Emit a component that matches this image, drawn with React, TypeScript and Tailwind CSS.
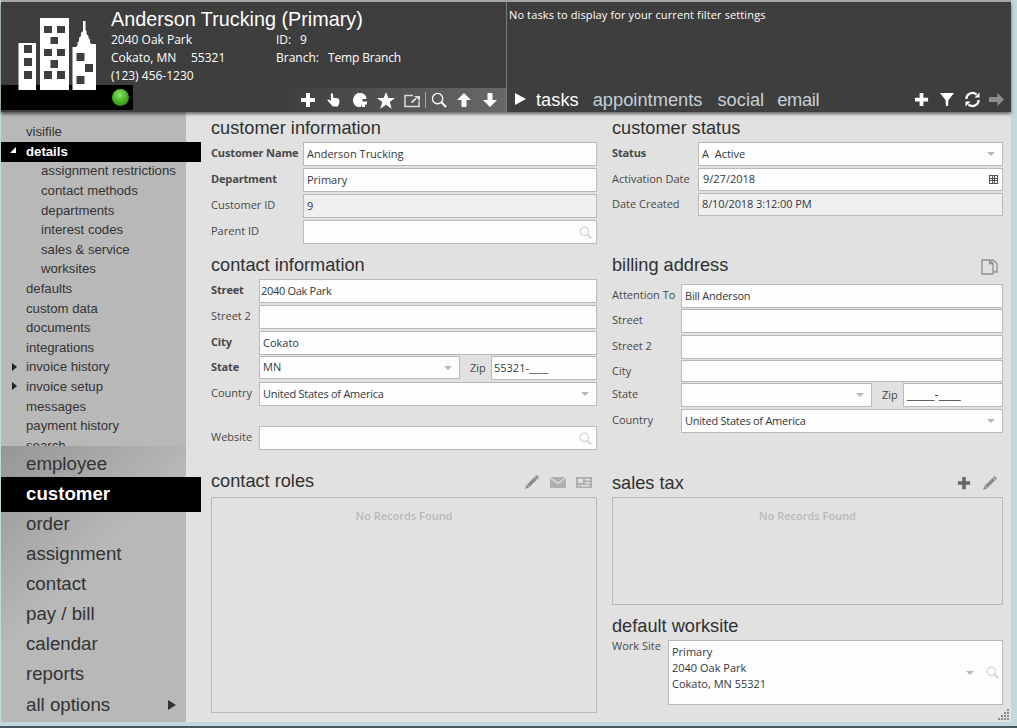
import React from "react";

const ui = "font-['Open_Sans','Noto_Sans',sans-serif]";
const ar = "font-['Liberation_Sans',Arial,sans-serif]";

function Plus({ c = "#fff", s = 16 }: { c?: string; s?: number }) {
  return (
    <svg width={s} height={s} viewBox="0 0 16 16" fill={c}>
      <path d="M6 1h4v5h5v4h-5v5H6v-5H1V6h5z" />
    </svg>
  );
}
function Hand() {
  return (
    <svg width="16" height="16" viewBox="0 0 16 16" fill="#fff">
      <path d="M5.2 1.5c.8-.6 1.7 0 1.8.8L7.3 6l1-.3 1.2.4 1.2-.1 1.2.6 1 .5.5 1.3-.2 3.4-1.5 2.7H6.6L3.8 11 1.6 8.8c-.5-.8.3-1.700 1.2-1.300L5 9 4.8 2.400c0-.4.1-.7.4-.9z" />
    </svg>
  );
}
function Puzzle() {
  return (
    <svg width="16" height="16" viewBox="0 0 16 16" fill="#fff">
      <path d="M6 1h3.500c2 .4 3.600 1.600 4.500 3.500L14.500 7H10.500v2.500H15V12.500h-2v2.500H10v-1.500H9V15H5.500C3 14 1.200 11.500 1 9 1 5.500 3 2 6 1z" />
    </svg>
  );
}
function Star() {
  return (
    <svg width="18" height="17" viewBox="0 0 18 17" fill="#fff">
      <path d="M9 0l2.400 6H18l-5.300 4 2 6.700L9 12.800l-5.700 3.900 2-6.700L0 6h6.600z" />
    </svg>
  );
}
function External() {
  return (
    <svg width="17" height="15" viewBox="0 0 17 15" fill="none" stroke="#dcdcdc">
      <path d="M9 2.500H1V13.500H15V8" strokeWidth="1.500" />
      <path d="M7.500 9.500L12 5.500" strokeWidth="1.800" />
      <path d="M10 3h6v5z" fill="#dcdcdc" stroke="none" />
    </svg>
  );
}
function Search({ c = "#fff", s = 17, w = 1.8 }: { c?: string; s?: number; w?: number }) {
  return (
    <svg width={s} height={s} viewBox="0 0 17 17" fill="none" stroke={c}>
      <circle cx="7" cy="7" r="5.500" strokeWidth={w} />
      <path d="M11 11l5 5" strokeWidth={w + 0.8} />
    </svg>
  );
}
function Up() {
  return (
    <svg width="14" height="16" viewBox="0 0 14 16" fill="#fff">
      <path d="M7 1l7 7H9.500v7h-5V8H0z" />
    </svg>
  );
}
function Down() {
  return (
    <svg width="14" height="16" viewBox="0 0 14 16" fill="#fff">
      <path d="M7 15L0 8h4.500V1h5v7H14z" />
    </svg>
  );
}
function Refresh() {
  return (
    <svg width="17" height="17" viewBox="0 0 17 17" fill="none" stroke="#fff" strokeWidth="2.300">
      <path d="M2.300 8a6.200 6.200 0 0 1 10.200-4.500" />
      <path d="M14.700 9a6.200 6.200 0 0 1-10.200 4.500" />
      <path d="M15.500 1.500v5h-5z" fill="#fff" stroke="none" />
      <path d="M1.500 15.500v-5h5z" fill="#fff" stroke="none" />
    </svg>
  );
}
function Pencil() {
  return (
    <svg width="16" height="16" viewBox="0 0 16 16" fill="#8b8b8b">
      <path d="M12.500 1L15 3.500 5 13.500 1 15l1.500-4z" />
      <path d="M3 11l2 2" stroke="#e1e1e1" strokeWidth=".8" />
      <path d="M11 3l2 2" stroke="#e1e1e1" strokeWidth=".8" />
    </svg>
  );
}
function Mail() {
  return (
    <svg width="16" height="11" viewBox="0 0 16 11">
      <path d="M0 0h16v11H0z" fill="#b0b0b0" />
      <path d="M0 .5l8 6 8-6" fill="none" stroke="#e1e1e1" strokeWidth="1.200" />
    </svg>
  );
}
function Card() {
  return (
    <svg width="16" height="11" viewBox="0 0 16 11">
      <path d="M0 0h16v11H0z" fill="#b0b0b0" />
      <path d="M2 2h5v4H2zM9 2h5v1.500H9zM9 5h5v1.500H9zM2 8h1.500v1.500H2zM5 8h9v1.500H5z" fill="#e1e1e1" />
    </svg>
  );
}
function Docs() {
  return (
    <svg width="17" height="16" viewBox="0 0 17 16" fill="none" stroke="#8d8d8d" strokeWidth="1.300">
      <path d="M1 1h7.500l3.500 3.500V15H1z" />
      <path d="M8.500 1v3.500H12" />
      <path d="M10 1h2l4 3.500V13h-3" />
    </svg>
  );
}
function Caret() {
  return <div className="w-0 h-0 border-l-[4px] border-r-[4px] border-t-[4px] border-l-transparent border-r-transparent border-t-[#b8b8b8]" />;
}

function Buildings() {
  return (
    <svg width="100" height="92" viewBox="0 0 100 92" className="absolute left-0 top-0">
      <path
        fill="#fff"
        fillRule="evenodd"
        d="M17.500 41H35V88H17.500zM23 43v8h8v-8zM23 56v8h8v-8zM23 69v8h8v-8zM39 16H68V88H39zM43 24v7h8v-7zM56 24v7h8v-7zM49.500 35v7h7.500v-7zM43 47v7h8v-7zM56 47v7h8v-7zM49.500 58v8h7.500v-8zM43 69v8h8v-8zM56 69v8h8v-8zM82 19h2.500v9l1 1v3l2 2v2l1.500 1.500v3l1.500 1.500H95V88H71.500V45h3.500l1.500-1.500v-3L78 39v-3l2-2v-3l2-2zM75.500 51v8h8v-8zM84 62v8h8v-8zM75.500 74v8h8v-8z"
      />
    </svg>
  );
}

function Box({
  children,
  right,
  read,
  cls = "h-[24px] flex-1",
  text = "pl-[3px]",
}: {
  children?: React.ReactNode;
  right?: React.ReactNode;
  read?: boolean;
  cls?: string;
  text?: string;
}) {
  return (
    <div
      className={`${cls} border border-[#b9b9b9] ${read ? "bg-[#efefef]" : "bg-[#fdfdfd]"} flex items-center justify-between text-[11px] text-[#33393f] whitespace-pre ${text}`}
    >
      <span>{children}</span>
      {right}
    </div>
  );
}
function Row({
  label,
  w,
  bold,
  children,
  cls = "h-[24px]",
}: {
  label: string;
  w: string;
  bold?: boolean;
  children: React.ReactNode;
  cls?: string;
}) {
  return (
    <div className={`flex ${cls}`}>
      <div className={`${w} shrink-0 text-[11px] leading-[21px] text-[#484848] ${bold ? "font-bold tracking-[-0.15px]" : ""}`}>{label}</div>
      {children}
    </div>
  );
}
function Heading({ children, cls, right }: { children: React.ReactNode; cls: string; right?: React.ReactNode }) {
  return (
    <div className={`flex items-end justify-between ${cls}`}>
      <div className={`${ar} text-[18.200px] leading-[20px] text-[#303030]`}>{children}</div>
      {right}
    </div>
  );
}
const SearchEnd = () => (
  <div className="pr-[4px]">
    <Search c="#d2d2d2" s={13} w={1.6} />
  </div>
);
const CaretEnd = () => (
  <div className="pr-[7px]">
    <Caret />
  </div>
);

function SubItem({ label, marker, active, sub }: { label: string; marker?: "open" | "closed"; active?: boolean; sub?: boolean }) {
  return (
    <div
      className={`h-[19.6px] flex items-center text-[13.200px] ${sub ? "pl-[40px]" : "pl-[25px]"} relative ${
        active ? "w-[200px] bg-black text-white font-bold" : "text-[#333]"
      }`}
    >
      {marker === "open" && <div className="absolute left-[9px] top-[5px] w-0 h-0 border-l-[6px] border-b-[6px] border-l-transparent border-b-white" />}
      {marker === "closed" && <div className="absolute left-[11px] top-[5px] w-0 h-0 border-l-[5px] border-y-[4px] border-y-transparent border-l-[#222]" />}
      {label}
    </div>
  );
}
function NavItem({ label, active, arrow }: { label: string; active?: boolean; arrow?: boolean }) {
  return (
    <div
      className={`flex items-center justify-between pl-[25px] text-[18.700px] ${
        active ? "h-[35px] -my-[2.5px] w-[200px] bg-black text-white font-bold" : "h-[30px] text-[#333]"
      } ${arrow ? "mt-px" : ""}`}
    >
      {label}
      {arrow && <div className="mr-[10px] w-0 h-0 border-l-[8px] border-y-[5px] border-y-transparent border-l-[#333]" />}
    </div>
  );
}
function Slot({ w, children }: { w: string; children: React.ReactNode }) {
  return <div className={`${w} shrink-0 flex justify-center`}>{children}</div>;
}

export default function App() {
  return (
    <div className={`w-[1017px] h-[728px] overflow-hidden bg-[#c2d8df] flex flex-col ${ui}`}>
      <div className="h-[722px] ml-px mr-[6px] flex flex-col bg-[#e1e1e1] border-t-2 border-[#a8a8a8]">
        {/* header */}
        <header className="h-[110px] shrink-0 flex bg-[#3e3e3e] text-white relative z-10 shadow-[0_2px_3px_rgba(0,0,0,0.55)]">
          <div className="w-[505px] shrink-0 flex flex-col justify-between relative">
            <div className="pl-[110px] pt-[5px] text-[12px]">
              <div className={`${ar} text-[19.800px] leading-[24px]`}>Anderson Trucking (Primary)</div>
              <div className="flex leading-[18px]">
                <div className="w-[165px]">2040 Oak Park</div>
                <div className="w-[24px]">ID:</div>
                <div>9</div>
              </div>
              <div className="flex leading-[18px]">
                <div className="w-[80px]">Cokato, MN</div>
                <div className="w-[85px]">55321</div>
                <div className="w-[52px]">Branch:</div>
                <div className="tracking-[-0.15px]">Temp Branch</div>
              </div>
              <div className="leading-[18px]">(123) 456-1230</div>
            </div>
            <div className="h-[28px] flex items-end">
              <div className="w-[132px] h-[25px] mb-[3px] bg-black flex items-center pl-[111px]">
                <div className="w-[17px] h-[17px] rounded-full bg-[radial-gradient(circle_at_45%_35%,#8fe46a,#3fae1c_55%,#1f7a10)]" />
              </div>
              <div className="flex-1 h-[24px] mb-px bg-[linear-gradient(to_right,#3e3e3e_40%,#686868)] flex items-center pl-[162px]">
                <Slot w="w-[26px]"><Plus /></Slot>
                <Slot w="w-[26px]"><Hand /></Slot>
                <Slot w="w-[26px]"><Puzzle /></Slot>
                <Slot w="w-[26px]"><Star /></Slot>
                <Slot w="w-[26px]"><External /></Slot>
                <div className="w-px h-[16px] bg-[#aaa]" />
                <Slot w="w-[25px]"><Search s={16} w={1.4} /></Slot>
                <Slot w="w-[26px]"><Up /></Slot>
                <Slot w="w-[26px]"><Down /></Slot>
              </div>
            </div>
            <Buildings />
          </div>
          <div className="flex-1 border-l border-[#7a7a7a] flex flex-col justify-between">
            <div className="pl-[2px] pt-[5px] text-[11px] leading-[16px] font-medium tracking-[0.12px]">No tasks to display for your current filter settings</div>
            <div className="flex items-center h-[26px] pl-[8px] pr-[3px]">
              <div className="w-0 h-0 border-l-[11px] border-y-[6px] border-y-transparent border-l-white mr-[10px]" />
              <div className={`${ar} flex pt-[2px] text-[18.300px] text-[#c5d0d8]`}>
                <span className="text-white">tasks</span>
                <span className="ml-[14px]">appointments</span>
                <span className="ml-[15px]">social</span>
                <span className="ml-[13px] tracking-[-0.3px]">email</span>
              </div>
              <div className="ml-auto flex items-center">
                <Slot w="w-[26px]"><Plus s={15} /></Slot>
                <Slot w="w-[26px]">
                  <svg width="14" height="13" viewBox="0 0 14 13" fill="#fff">
                    <path d="M0 0h14L8.500 7 8 13 6 13 5.500 7z" />
                  </svg>
                </Slot>
                <Slot w="w-[24px]"><Refresh /></Slot>
                <Slot w="w-[24px]">
                  <svg width="15" height="13" viewBox="0 0 15 13" fill="#8e8e8e">
                    <path d="M15 6.500L8.500 0v4H0v5h8.500v4z" />
                  </svg>
                </Slot>
              </div>
            </div>
          </div>
        </header>

        {/* body */}
        <div className="flex-1 flex min-h-0 relative">
          <aside className={`${ar} w-[200px] shrink-0 flex flex-col bg-[linear-gradient(to_right,#b8b8b8_185px,transparent_185px)]`}>
            <div className="h-[334px] shrink-0 overflow-hidden pt-[10.4px]">
              <SubItem label="visifile" />
              <SubItem label="details" marker="open" active />
              <SubItem label="assignment restrictions" sub />
              <SubItem label="contact methods" sub />
              <SubItem label="departments" sub />
              <SubItem label="interest codes" sub />
              <SubItem label="sales & service" sub />
              <SubItem label="worksites" sub />
              <SubItem label="defaults" />
              <SubItem label="custom data" />
              <SubItem label="documents" />
              <SubItem label="integrations" />
              <SubItem label="invoice history" marker="closed" />
              <SubItem label="invoice setup" marker="closed" />
              <SubItem label="messages" />
              <SubItem label="payment history" />
              <SubItem label="search" />
            </div>
            <div className="flex-1 w-[185px] pt-[3px] bg-[linear-gradient(135deg,#969696,#b8b8b8_45%)]">
              <NavItem label="employee" />
              <NavItem label="customer" active />
              <NavItem label="order" />
              <NavItem label="assignment" />
              <NavItem label="contact" />
              <NavItem label="pay / bill" />
              <NavItem label="calendar" />
              <NavItem label="reports" />
              <NavItem label="all options" arrow />
            </div>
          </aside>

          <main className="flex-1 flex pl-[10px] pr-[8px] gap-[15px] relative">
            {/* left column */}
            <div className="w-[386px] shrink-0 flex flex-col">
              <Heading cls="h-[30px] pb-[4px]">customer information</Heading>
              <div className="flex flex-col gap-[2px]">
                <Row label="Customer Name" w="w-[92px]" bold>
                  <Box>Anderson Trucking</Box>
                </Row>
                <Row label="Department" w="w-[92px]" bold>
                  <Box>Primary</Box>
                </Row>
                <Row label="Customer ID" w="w-[92px]">
                  <Box read>9</Box>
                </Row>
                <Row label="Parent ID" w="w-[92px]">
                  <Box right={<SearchEnd />} />
                </Row>
              </div>
              <Heading cls="h-[35px] pb-[4px]">contact information</Heading>
              <div className="flex flex-col gap-[2px]">
                <Row label="Street" w="w-[48px]" bold>
                  <Box text="pl-[1px] tracking-[-0.3px]">2040 Oak Park</Box>
                </Row>
                <Row label="Street 2" w="w-[48px]">
                  <Box />
                </Row>
                <Row label="City" w="w-[48px]" bold cls="h-[24px] -mb-px">
                  <Box>Cokato</Box>
                </Row>
                <Row label="State" w="w-[48px]" bold>
                  <Box cls="h-[23px] w-[201px]" right={<CaretEnd />}>MN</Box>
                  <div className="w-[31px] pl-[10px] text-[11px] leading-[23px] text-[#484848]">Zip</div>
                  <Box cls="h-[24px] flex-1" text="pl-[2px]">55321-____</Box>
                </Row>
                <Row label="Country" w="w-[48px]">
                  <Box right={<CaretEnd />} text="pl-[3px] tracking-[-0.25px]">United States of America</Box>
                </Row>
              </div>
              <div className="mt-[20px]">
                <Row label="Website" w="w-[48px]" cls="h-[24px] leading-[24px]">
                  <Box right={<SearchEnd />} />
                </Row>
              </div>
              <Heading
                cls="h-[47px] pb-[6px]"
                right={
                  <div className="flex items-center gap-[10px] pr-[5px] pb-[1px]">
                    <Pencil />
                    <Mail />
                    <Card />
                  </div>
                }
              >
                contact roles
              </Heading>
              <div className="h-[216px] border border-[#b9b9b9] pt-[10px] text-center text-[11px] font-semibold text-[#b9b9b9]">No Records Found</div>
            </div>

            {/* right column */}
            <div className="w-[391px] shrink-0 flex flex-col relative">
              <Heading cls="h-[30px] pb-[4px]">customer status</Heading>
              <div className="flex flex-col gap-[2px]">
                <Row label="Status" w="w-[86px]" bold>
                  <Box right={<CaretEnd />}>A  Active</Box>
                </Row>
                <Row label="Activation Date" w="w-[86px]" cls="h-[23px]">
                  <Box cls="h-[23px] flex-1" text="pl-[4px]"
                    right={
                      <svg width="9" height="9" viewBox="0 0 9 9" className="mr-[4px]" fill="#555">
                        <path fillRule="evenodd" d="M0 0h9v9H0zM1 1v2h2V1zM4 1v2h1V1zM6 1v2h2V1zM1 4v1h2V4zM4 4v1h1V4zM6 4v1h2V4zM1 6v2h2V6zM4 6v2h1V6zM6 6v2h2V6z" />
                      </svg>
                    }
                  >
                    9/27/2018
                  </Box>
                </Row>
                <Row label="Date Created" w="w-[86px]" cls="h-[23px]">
                  <Box read cls="h-[23px] flex-1" text="pl-[3px] tracking-[-0.1px]">8/10/2018 3:12:00 PM</Box>
                </Row>
              </div>
              <Heading cls="h-[68px] pb-[9px]" right={<div className="pr-[5px]"><Docs /></div>}>billing address</Heading>
              <div className="flex flex-col gap-[2px]">
                <Row label="Attention To" w="w-[69px]" cls="h-[24px] -mb-px">
                  <Box text="pl-[3px] tracking-[-0.2px]">Bill Anderson</Box>
                </Row>
                <Row label="Street" w="w-[69px]">
                  <Box />
                </Row>
                <Row label="Street 2" w="w-[69px]" cls="h-[24px] -mb-px">
                  <Box />
                </Row>
                <Row label="City" w="w-[69px]" cls="h-[22px] -mb-px">
                  <Box cls="h-[22px] flex-1" />
                </Row>
                <Row label="State" w="w-[69px]">
                  <Box cls="h-[24px] w-[191px]" right={<CaretEnd />} />
                  <div className="w-[31px] pl-[10px] text-[11px] leading-[24px] text-[#484848]">Zip</div>
                  <Box cls="h-[24px] flex-1" text="pl-[3px]"><span className="text-[12.600px]">_____-____</span></Box>
                </Row>
                <Row label="Country" w="w-[69px]">
                  <Box right={<CaretEnd />} text="pl-[3px] tracking-[-0.25px]">United States of America</Box>
                </Row>
              </div>
              <Heading
                cls="h-[64px] pb-[4px]"
                right={
                  <div className="flex items-center gap-[11px] pr-[5px] pb-[2px]">
                    <Plus c="#666" s={14} />
                    <Pencil />
                  </div>
                }
              >
                sales tax
              </Heading>
              <div className="h-[108px] border border-[#b9b9b9] pt-[10px] text-center text-[11px] font-semibold text-[#b9b9b9]">No Records Found</div>
              <Heading cls="h-[35px] pb-[4px]">default worksite</Heading>
              <div className="flex h-[65px]">
                <div className="w-[56px] shrink-0 text-[11px] leading-[11px] text-[#484848]">Work Site</div>
                <div className="flex-1 border border-[#b9b9b9] bg-[#fdfdfd] flex items-center pl-[3px] text-[11px] leading-[16px] text-[#33393f]">
                  <div className="flex-1 -mt-[9px]">
                    <div>Primary</div>
                    <div>2040 Oak Park</div>
                    <div>Cokato, MN 55321</div>
                  </div>
                  <div className="mr-[12px]">
                    <Caret />
                  </div>
                  <div className="pr-[3px]">
                    <Search c="#d2d2d2" s={13} w={1.6} />
                  </div>
                </div>
              </div>
            </div>
            <svg width="12" height="12" viewBox="0 0 12 12" className="absolute right-[1px] bottom-[1px]" fill="#8a8a8a">
              <path d="M9 0h2v2H9zM6 3h2v2H6zM9 3h2v2H9zM3 6h2v2H3zM6 6h2v2H6zM9 6h2v2H9zM0 9h2v2H0zM3 9h2v2H3zM6 9h2v2H6zM9 9h2v2H9z" />
            </svg>
          </main>
        </div>
      </div>
      <div className="mt-[4px] h-[2px] bg-[#45565c]" />
    </div>
  );
}
